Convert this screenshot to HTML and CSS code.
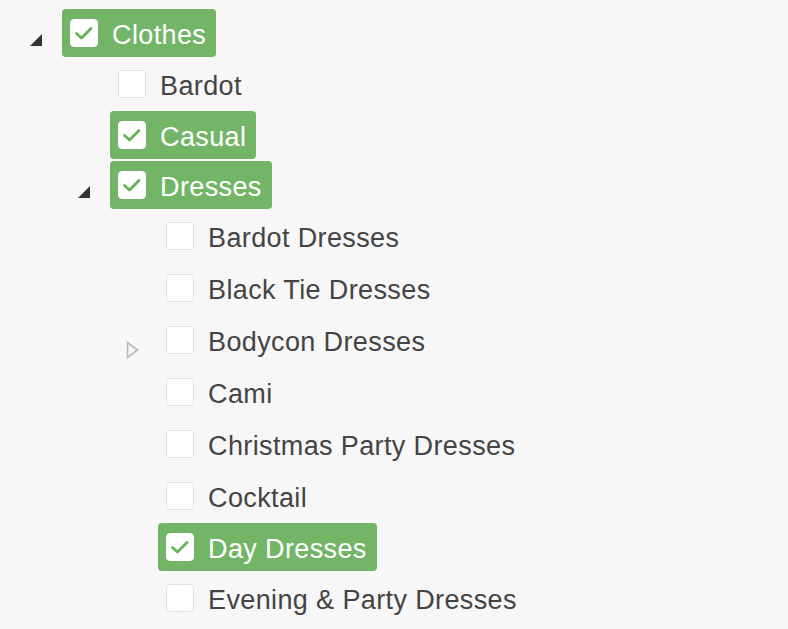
FILE: index.html
```html
<!DOCTYPE html>
<html>
<head>
<meta charset="utf-8">
<link rel="stylesheet" href="styles.css">
</head>
<body>
<div class="tree">
  <ul class="level">
    <li>
      <div class="row sel">
        <span class="toggle"><svg viewBox="0 0 48 50" width="48" height="50"><polygon class="open" points="28,26 28,38 16,38"/></svg></span>
        <span class="anchor"><span class="cb"><svg viewBox="0 0 28 28" width="28" height="28"><path d="M6.5 14.5 L11.5 19 L21 9.5"/></svg></span><span class="label">Clothes</span></span>
      </div>
      <ul class="level sub">
        <li>
          <div class="row"><span class="toggle"></span><span class="anchor"><span class="cb"></span><span class="label">Bardot</span></span></div>
        </li>
        <li>
          <div class="row sel"><span class="toggle"></span><span class="anchor"><span class="cb"><svg viewBox="0 0 28 28" width="28" height="28"><path d="M6.5 14.5 L11.5 19 L21 9.5"/></svg></span><span class="label">Casual</span></span></div>
        </li>
        <li>
          <div class="row sel">
            <span class="toggle"><svg viewBox="0 0 48 50" width="48" height="50"><polygon class="open" points="28,26 28,38 16,38"/></svg></span>
            <span class="anchor"><span class="cb"><svg viewBox="0 0 28 28" width="28" height="28"><path d="M6.5 14.5 L11.5 19 L21 9.5"/></svg></span><span class="label">Dresses</span></span>
          </div>
          <ul class="level sub">
            <li><div class="row"><span class="toggle"></span><span class="anchor"><span class="cb"></span><span class="label">Bardot Dresses</span></span></div></li>
            <li><div class="row"><span class="toggle"></span><span class="anchor"><span class="cb"></span><span class="label">Black Tie Dresses</span></span></div></li>
            <li><div class="row"><span class="toggle"><svg viewBox="0 0 48 52" width="48" height="52"><polygon class="closed" points="17.5,28.5 17.5,43.5 27.5,36"/></svg></span><span class="anchor"><span class="cb"></span><span class="label">Bodycon Dresses</span></span></div></li>
            <li><div class="row"><span class="toggle"></span><span class="anchor"><span class="cb"></span><span class="label">Cami</span></span></div></li>
            <li><div class="row"><span class="toggle"></span><span class="anchor"><span class="cb"></span><span class="label">Christmas Party Dresses</span></span></div></li>
            <li><div class="row"><span class="toggle"></span><span class="anchor"><span class="cb"></span><span class="label">Cocktail</span></span></div></li>
            <li><div class="row sel"><span class="toggle"></span><span class="anchor"><span class="cb"><svg viewBox="0 0 28 28" width="28" height="28"><path d="M6.5 14.5 L11.5 19 L21 9.5"/></svg></span><span class="label">Day Dresses</span></span></div></li>
            <li><div class="row"><span class="toggle"></span><span class="anchor"><span class="cb"></span><span class="label">Evening &amp; Party Dresses</span></span></div></li>
          </ul>
        </li>
      </ul>
    </li>
  </ul>
</div>
</body>
</html>
```

FILE: styles.css
```css
html, body {
  margin: 0;
  padding: 0;
  background: #f7f7f7;
}
body {
  font-family: "Liberation Sans", Arial, sans-serif;
  overflow: hidden;
}
.tree {
  padding: 8px 0 0 14px;
}
.level {
  list-style: none;
  margin: 0;
  padding: 0;
}
.level.sub {
  padding-left: 48px;
}
.row {
  display: flex;
  align-items: center;
  height: 52px;
}
.row.sel {
  height: 50px;
}
.toggle {
  width: 48px;
  height: 100%;
  flex: none;
  display: block;
}
.toggle svg {
  display: block;
}
.open {
  fill: #333333;
}
.closed {
  fill: none;
  stroke: #b8b8b8;
  stroke-width: 1.6;
  stroke-linejoin: miter;
}
.anchor {
  display: flex;
  align-items: center;
  height: 48px;
  padding: 0 10px 0 8px;
  border-radius: 4px;
  box-sizing: border-box;
}
.sel .anchor {
  background: #73b567;
}
.cb {
  width: 28px;
  height: 28px;
  box-sizing: border-box;
  border: 1px solid #dbe2e2;
  border-radius: 4px;
  background: #ffffff;
  flex: none;
  display: block;
}
.sel .cb {
  border-color: #ffffff;
}
.cb svg {
  display: block;
  margin: -1px;
}
.cb path {
  fill: none;
  stroke: #66b257;
  stroke-width: 2.8;
  stroke-linecap: round;
  stroke-linejoin: round;
}
.label {
  margin-left: 14px;
  padding-top: 3px;
  font-size: 27px;
  line-height: 32px;
  color: #444444;
  white-space: nowrap;
  letter-spacing: 0.38px;
}
.sel .label {
  color: #ffffff;
}
```
